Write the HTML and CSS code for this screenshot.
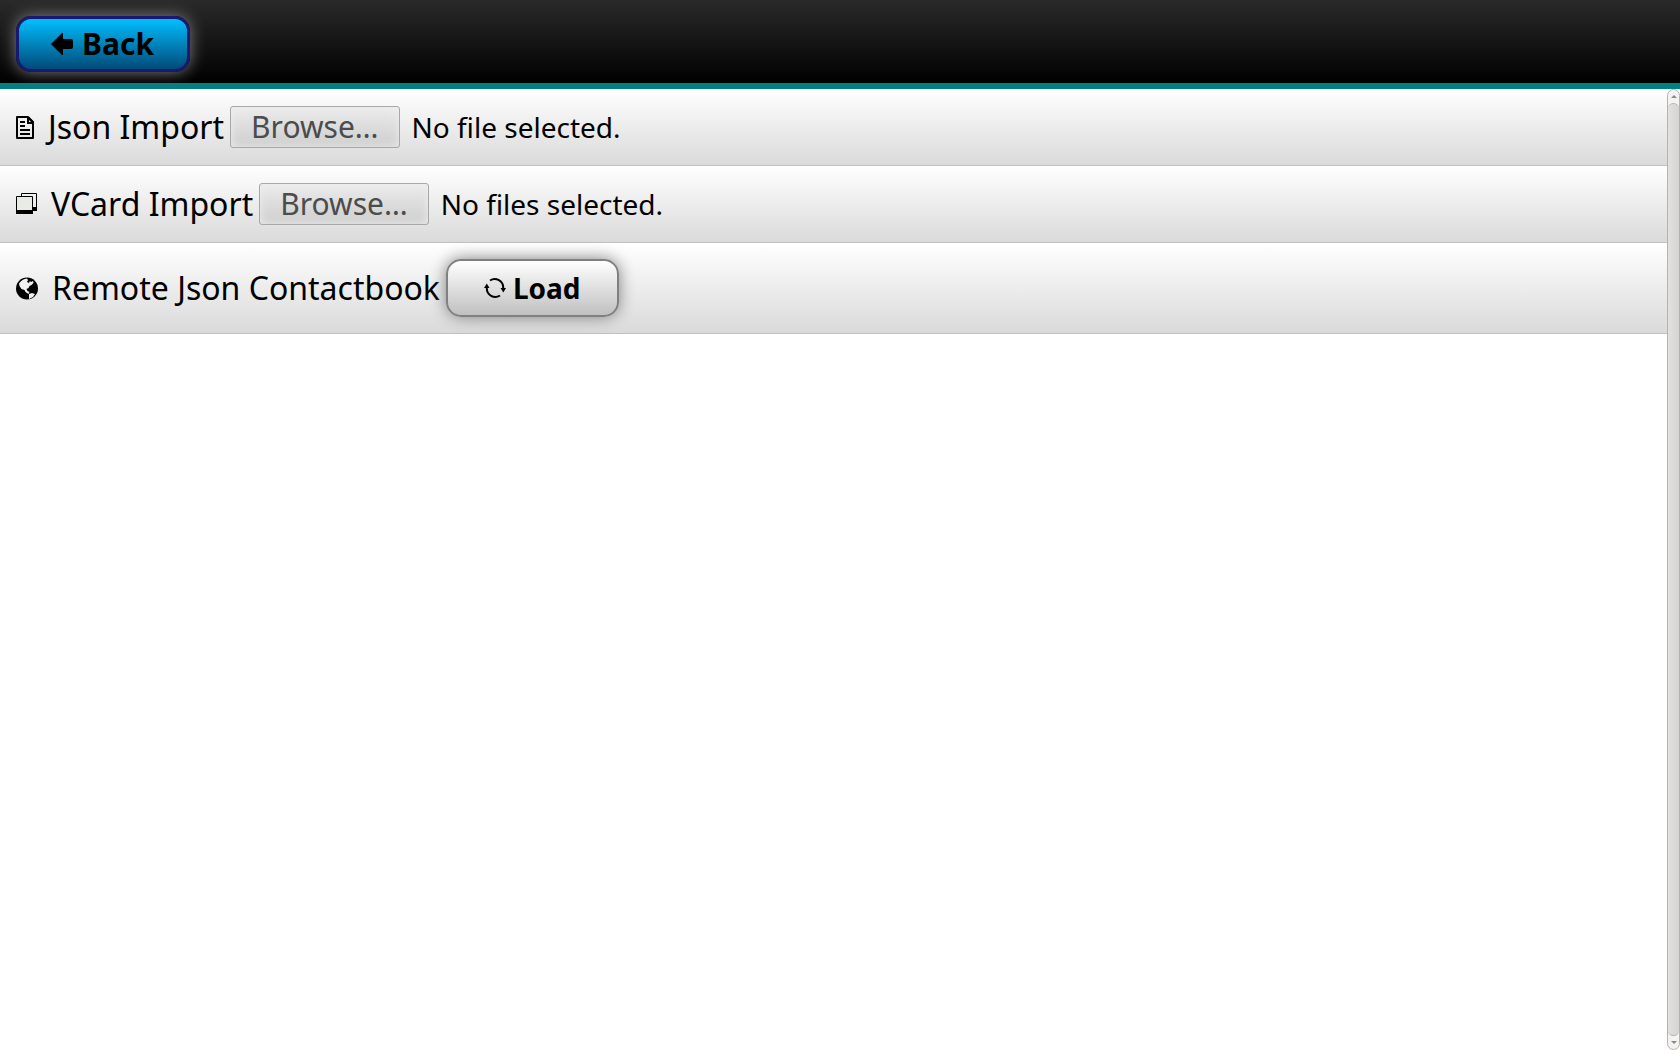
FILE: index.html
```html
<!DOCTYPE html>
<html lang="en">
<head>
  <meta charset="utf-8">
  <meta name="viewport" content="width=device-width, initial-scale=1">
  <title>Import contacts</title>
  <link rel="stylesheet" href="styles.css">
</head>
<body>
  <header class="topbar">
    <button type="button" class="button button-back">
      <svg class="icon" viewBox="0 0 22 22" aria-hidden="true"><path d="M0 11 11 0q1-.5 1 .5V6h8q2 0 2 2v6q0 2-2 2h-8v5.500q0 1-1 .5z"/></svg>
      Back
    </button>
  </header>
  <div class="viewport">
    <main class="list">
      <div class="row">
        <svg class="icon icon-file" viewBox="0 0 18 23" aria-hidden="true">
          <path fill="none" stroke="#000" stroke-width="2" stroke-linejoin="round" d="M1 1h11l5 5v16H1z"/>
          <path d="M11 1h2l5 5v2h-7zM4 5h5v2H4zM4 9h5v2H4zM4 13h10v2H4zM4 17h10v2H4z"/>
          <path fill="#eee" d="M13 4v2h2z"/>
        </svg>
        <label class="label" for="json-browse">Json Import</label>
        <button type="button" class="browse" id="json-browse" data-input="json-file">Browse…</button>
        <span class="status">No file selected.</span>
        <input type="file" id="json-file" hidden>
      </div>
      <div class="row">
        <svg class="icon icon-stack" viewBox="0 0 21 22" aria-hidden="true">
          <path fill="none" stroke="#000" d="M5.500 3V.5h15V14"/>
          <path d="M17 14h4v4h-4z"/>
          <path fill="#e9ece5" stroke="#000" d="M.5 3.500h16v17H.5z"/>
          <path d="M0 17h17v4H0z"/>
        </svg>
        <label class="label" for="vcard-browse">VCard Import</label>
        <button type="button" class="browse" id="vcard-browse" data-input="vcard-files">Browse…</button>
        <span class="status">No files selected.</span>
        <input type="file" id="vcard-files" multiple hidden>
      </div>
      <div class="row">
        <svg class="icon icon-globe" viewBox="0 0 22 23" aria-hidden="true">
          <circle cx="11" cy="11.500" r="11"/>
          <path fill="#f0f0f0" d="M3 6.500Q6 2 11 1.500l1 1.500-1 2 2 1 1-2 1 1 2-1 .5 2-2 2-2 1-1 2-2 1 1 2 2 1-1 2-3-2-1-2-3-1-2-3zM13 17l3-1 3 1-2 3-4 2z"/>
        </svg>
        <label class="label" for="load">Remote Json Contactbook</label>
        <button type="button" class="button button-load" id="load">
          <svg class="icon" viewBox="0 0 22 20" aria-hidden="true">
            <path fill="none" stroke="#000" stroke-width="2" d="M6 2.500A8.500 8.500 0 0 1 19.200 10M16 17.500A8.500 8.500 0 0 1 2.800 10"/>
            <path d="M16.500 10H22l-2.700 4.500zM0 10h5.500L2.800 5.500z"/>
          </svg>
          Load
        </button>
      </div>
    </main>
    <div class="scrollbar" aria-hidden="true">
      <span class="scroll-arrow scroll-up"></span>
      <span class="scroll-thumb"></span>
      <span class="scroll-arrow scroll-down"></span>
    </div>
  </div>
  <script src="import.js"></script>
</body>
</html>
```
FILE: styles.css
```css
* {
  box-sizing: border-box;
}

body {
  margin: 0;
  min-height: 100vh;
  display: flex;
  flex-direction: column;
  background: #fff;
  color: #000;
  font-family: "Noto Sans", "Open Sans", sans-serif;
  font-size: 28px;
  line-height: 40px;
}

.topbar {
  padding: 16px 16px 11px;
  border-bottom: 6px solid teal;
  background: linear-gradient(#2a2a2a, #000);
}

.button {
  display: flex;
  align-items: center;
  color: #000;
  font: inherit;
  font-weight: 700;
  border-radius: 15px;
}

.icon {
  flex: none;
  width: 22px;
  height: 22px;
}

.button-back {
  gap: 9px;
  height: 56px;
  padding: 0 33px 0 32px;
  font-size: 30px;
  border: 3px solid midnightblue;
  background: linear-gradient(deepskyblue, #004a78);
  box-shadow: 0 0 16px gray;
}

.button-load {
  gap: 7px;
  height: 58px;
  padding: 0 36px;
  border: 2px solid gray;
  background: linear-gradient(#fff, silver);
  box-shadow: 0 0 16px gray;
}

.viewport {
  flex: 1;
  display: flex;
}

.list {
  flex: 1;
}

.row {
  display: flex;
  align-items: center;
  padding: 16px;
  min-height: 77px;
  border-bottom: 1px solid silver;
  background: linear-gradient(#fff, #dadada);
}

.label {
  margin: 0 6px 0 14px;
  font-size: 32px;
}

.icon-file {
  width: 18px;
  height: 23px;
}

.icon-stack {
  width: 21px;
}

.icon-globe {
  height: 23px;
}

.browse {
  height: 42px;
  padding: 0 20px;
  color: #4c4c4c;
  font: inherit;
  font-size: 30px;
  line-height: 40px;
  border: 1px solid #a8a8a8;
  border-radius: 3px;
  background: linear-gradient(#ececec, #cdcdcd);
  box-shadow: inset 0 0 10px #eee;
}

.status {
  margin-left: 12px;
}

.scrollbar {
  display: flex;
  flex-direction: column;
  width: 13px;
  border: 1px solid #b5b2af;
  border-radius: 7px;
  background: #f4f3f2;
}

.scroll-arrow {
  display: flex;
  align-items: center;
  justify-content: center;
  height: 13px;
}

.scroll-arrow::before {
  content: "";
  border: 3px solid transparent;
}

.scroll-up::before {
  border-top-width: 0;
  border-bottom-color: #8c8985;
}

.scroll-down::before {
  border-bottom-width: 0;
  border-top-color: #8c8985;
}

.scroll-thumb {
  flex: 1;
  border: solid #b5b2af;
  border-width: 1px 0;
  border-radius: 6px;
  background: linear-gradient(to right, #e3e1df, #d6d4d2);
}
```
FILE: import.js
```js
document.querySelectorAll(".browse").forEach(function (button) {
  var input = document.getElementById(button.dataset.input);
  button.addEventListener("click", function () {
    input.click();
  });
});
```
